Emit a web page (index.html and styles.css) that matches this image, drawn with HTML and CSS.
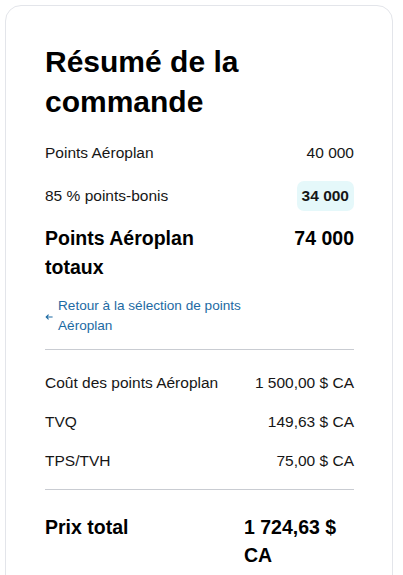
FILE: index.html
```html
<!DOCTYPE html>
<html lang="fr">
<head>
<meta charset="utf-8">
<title>Résumé de la commande</title>
<link rel="stylesheet" href="styles.css">
</head>
<body>
<section class="card">
  <h1 class="title">Résumé de la commande</h1>

  <div class="points">
    <div class="row">
      <span class="label">Points Aéroplan</span>
      <span class="value">40 000</span>
    </div>
    <div class="row">
      <span class="label">85 % points-bonis</span>
      <span class="value badge">34 000</span>
    </div>
    <div class="row row-total">
      <span class="label">Points Aéroplan totaux</span>
      <span class="value">74 000</span>
    </div>
  </div>

  <a class="back" href="#">
    <svg class="arrow" width="8" height="6" viewBox="0 0 8 6" aria-hidden="true">
      <path d="M7.6 3H1.2M3.6 0.7L1.2 3L3.6 5.3" fill="none" stroke="currentColor" stroke-width="1.1"/>
    </svg>
    <span class="back-text">Retour à la sélection de points Aéroplan</span>
  </a>

  <hr class="divider">

  <div class="costs">
    <div class="row row-cost">
      <span class="label">Coût des points Aéroplan</span>
      <span class="value">1 500,00 $ CA</span>
    </div>
    <div class="row row-cost">
      <span class="label">TVQ</span>
      <span class="value">149,63 $ CA</span>
    </div>
    <div class="row row-cost">
      <span class="label">TPS/TVH</span>
      <span class="value">75,00 $ CA</span>
    </div>
  </div>

  <hr class="divider divider-2">

  <div class="row row-total row-price">
    <span class="label">Prix total</span>
    <span class="value">1 724,63 $ CA</span>
  </div>
</section>
</body>
</html>
```

FILE: styles.css
```css
html, body {
  margin: 0;
  padding: 0;
  background: #ffffff;
}

body {
  font-family: "Liberation Sans", Arial, sans-serif;
  color: #161616;
  padding: 5px 0 0 5px;
}

.card {
  width: 309px;
  padding: 36px 38px 40px 39px;
  border: 1px solid #e3e5ea;
  border-radius: 16px;
  background: #ffffff;
}

.title {
  margin: 0 0 16px 0;
  font-size: 30px;
  line-height: 40px;
  font-weight: 700;
  color: #000000;
}

.points {
  display: flex;
  flex-direction: column;
  gap: 13px;
}

.row {
  display: flex;
  align-items: center;
  min-height: 30px;
  font-size: 15.5px;
  line-height: 22px;
}

.label {
  max-width: 65%;
}

.value {
  margin-left: auto;
  max-width: 36%;
}

.badge {
  font-weight: 700;
  background: #e5f8fa;
  border-radius: 7px;
  padding: 4px 5px 4px 5px;
  line-height: 22px;
}

.row-total {
  align-items: flex-start;
  font-size: 19.5px;
  line-height: 28.8px;
  font-weight: 700;
  color: #000000;
}

.back {
  display: flex;
  align-items: center;
  gap: 5px;
  margin-top: 14px;
  width: 200px;
  color: #1d6aa3;
  text-decoration: none;
  font-size: 13.6px;
  line-height: 20px;
}

.arrow {
  flex: none;
  margin-top: 2px;
}

.divider {
  margin: 13px 0 0 0;
  border: 0;
  border-top: 1px solid #c9ccd2;
  height: 0;
}

.costs {
  display: flex;
  flex-direction: column;
  gap: 15px;
  margin-top: 21px;
}

.row-cost {
  min-height: 24px;
}

.row-cost .value {
  max-width: none;
}

.divider-2 {
  margin-top: 16px;
}

.row-price {
  margin-top: 23px;
}

.row-price .value {
  width: 110px;
  max-width: 110px;
}
```
